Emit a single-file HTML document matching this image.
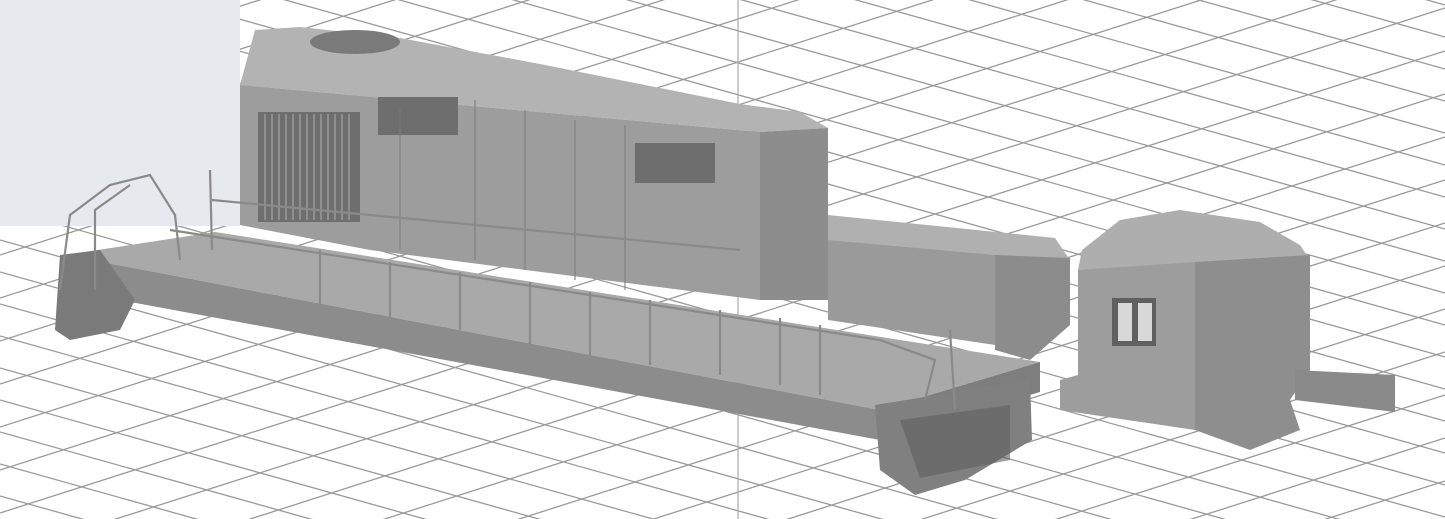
<!DOCTYPE html>
<html><head><style>html,body{margin:0;padding:0;background:#fff;overflow:hidden;width:1445px;height:519px}svg{display:block;position:absolute;left:0;top:0}</style></head>
<body>
<svg width="1445" height="519" viewBox="0 0 1445 519" xmlns="http://www.w3.org/2000/svg">
<defs>
<clipPath id="c"><rect width="1445" height="519"/></clipPath>
</defs>
<rect width="1445" height="519" fill="#fff"/>
<g stroke="#9a9a9c" stroke-width="1.3" clip-path="url(#c)">
<g>
<line x1="0" y1="-400" x2="1445" y2="5"/><line x1="0" y1="-368" x2="1445" y2="37"/><line x1="0" y1="-336" x2="1445" y2="69"/><line x1="0" y1="-304" x2="1445" y2="101"/><line x1="0" y1="-272" x2="1445" y2="133"/><line x1="0" y1="-240" x2="1445" y2="165"/><line x1="0" y1="-208" x2="1445" y2="197"/><line x1="0" y1="-176" x2="1445" y2="229"/><line x1="0" y1="-144" x2="1445" y2="261"/><line x1="0" y1="-112" x2="1445" y2="293"/><line x1="0" y1="-80" x2="1445" y2="325"/><line x1="0" y1="-48" x2="1445" y2="357"/><line x1="0" y1="-16" x2="1445" y2="389"/><line x1="0" y1="16" x2="1445" y2="421"/><line x1="0" y1="48" x2="1445" y2="453"/><line x1="0" y1="80" x2="1445" y2="485"/><line x1="0" y1="112" x2="1445" y2="517"/><line x1="0" y1="144" x2="1445" y2="549"/><line x1="0" y1="176" x2="1445" y2="581"/><line x1="0" y1="208" x2="1445" y2="613"/><line x1="0" y1="240" x2="1445" y2="645"/><line x1="0" y1="272" x2="1445" y2="677"/><line x1="0" y1="304" x2="1445" y2="709"/><line x1="0" y1="336" x2="1445" y2="741"/><line x1="0" y1="368" x2="1445" y2="773"/><line x1="0" y1="400" x2="1445" y2="805"/><line x1="0" y1="432" x2="1445" y2="837"/><line x1="0" y1="464" x2="1445" y2="869"/><line x1="0" y1="496" x2="1445" y2="901"/>
</g>
<g>
<line x1="0" y1="40" x2="1445" y2="-422"/><line x1="0" y1="83" x2="1445" y2="-379"/><line x1="0" y1="126" x2="1445" y2="-336"/><line x1="0" y1="169" x2="1445" y2="-293"/><line x1="0" y1="212" x2="1445" y2="-250"/><line x1="0" y1="255" x2="1445" y2="-207"/><line x1="0" y1="298" x2="1445" y2="-164"/><line x1="0" y1="341" x2="1445" y2="-121"/><line x1="0" y1="384" x2="1445" y2="-78"/><line x1="0" y1="427" x2="1445" y2="-35"/><line x1="0" y1="470" x2="1445" y2="8"/><line x1="0" y1="513" x2="1445" y2="51"/><line x1="0" y1="556" x2="1445" y2="94"/><line x1="0" y1="599" x2="1445" y2="137"/><line x1="0" y1="642" x2="1445" y2="180"/><line x1="0" y1="685" x2="1445" y2="223"/><line x1="0" y1="728" x2="1445" y2="266"/><line x1="0" y1="771" x2="1445" y2="309"/><line x1="0" y1="814" x2="1445" y2="352"/><line x1="0" y1="857" x2="1445" y2="395"/><line x1="0" y1="900" x2="1445" y2="438"/><line x1="0" y1="943" x2="1445" y2="481"/><line x1="0" y1="986" x2="1445" y2="524"/>
</g>
<line x1="738" y1="0" x2="738" y2="519" stroke="#b0b0b0"/>
</g>
<rect x="0" y="0" width="240" height="226" fill="#e6eaef"/>

<polygon points="65,255 215,232 1040,362 880,410" fill="#a9a9a9"/>
<polygon points="65,255 880,410 880,440 65,290" fill="#8c8c8c"/>
<polygon points="880,410 1040,362 1040,392 880,440" fill="#7e7e7e"/>
<polygon points="60,255 100,250 135,300 120,330 70,340 55,330" fill="#7a7a7a"/>
<polygon points="875,405 1030,380 1032,440 965,480 915,495 880,470" fill="#808080"/>
<polygon points="900,420 1010,405 1010,460 920,478" fill="#5f5f5f" opacity=".6"/>

<polygon points="255,30 300,27 400,38 540,64 740,104 800,112 828,128 760,132 240,85" fill="#b3b3b3"/>
<polygon points="240,85 760,132 760,300 370,250 240,225" fill="#9d9d9d"/>
<polygon points="760,132 828,128 828,300 760,300" fill="#8d8d8d"/>
<ellipse cx="355" cy="42" rx="45" ry="12" fill="#7a7a7a"/>
<rect x="258" y="112" width="102" height="110" fill="#6e6e6e"/>
<g stroke="#9a9a9a" stroke-width="1.5">
<line x1="265" y1="114" x2="265" y2="220"/><line x1="272" y1="114" x2="272" y2="220"/><line x1="279" y1="114" x2="279" y2="220"/><line x1="286" y1="114" x2="286" y2="220"/><line x1="293" y1="114" x2="293" y2="220"/><line x1="300" y1="114" x2="300" y2="220"/><line x1="307" y1="114" x2="307" y2="220"/><line x1="314" y1="114" x2="314" y2="220"/><line x1="321" y1="114" x2="321" y2="220"/><line x1="328" y1="114" x2="328" y2="220"/><line x1="335" y1="114" x2="335" y2="220"/><line x1="342" y1="114" x2="342" y2="220"/><line x1="349" y1="114" x2="349" y2="220"/>
</g>
<rect x="378" y="97" width="80" height="38" fill="#6e6e6e"/>
<rect x="635" y="143" width="80" height="40" fill="#6e6e6e"/>
<g stroke="#7a7a7a" stroke-width="1">
<line x1="400" y1="110" x2="400" y2="250"/><line x1="475" y1="100" x2="475" y2="260"/><line x1="525" y1="110" x2="525" y2="270"/><line x1="575" y1="120" x2="575" y2="280"/><line x1="625" y1="125" x2="625" y2="290"/>
</g>

<polygon points="828,215 1055,238 1070,260 870,252 828,240" fill="#b0b0b0"/>
<polygon points="828,240 995,255 995,345 828,320" fill="#9a9a9a"/>
<polygon points="995,255 1070,258 1070,325 1030,360 995,350" fill="#8c8c8c"/>

<polygon points="1082,250 1120,220 1180,210 1260,222 1300,245 1310,260 1078,270" fill="#aeaeae"/>
<polygon points="1078,270 1195,262 1195,430 1060,410 1060,380 1078,375" fill="#9d9d9d"/>
<polygon points="1195,262 1310,255 1310,370 1290,400 1300,430 1250,450 1195,430" fill="#8e8e8e"/>
<rect x="1112" y="298" width="44" height="48" fill="#606060"/>
<rect x="1118" y="303" width="14" height="38" fill="#d8d8d8"/>
<rect x="1138" y="303" width="14" height="38" fill="#d8d8d8"/>
<polygon points="1295,370 1395,375 1395,412 1295,400" fill="#8a8a8a"/>

<g stroke="#8a8a8a" stroke-width="2.2" fill="none">
<path d="M60,290 L70,215 L110,185 L150,175 L175,215 L180,260"/>
<path d="M95,290 L95,210 L130,185"/>
<path d="M210,170 L212,250"/>
<path d="M212,200 L740,250"/>
<path d="M170,230 L880,340"/>
<path d="M320,250 L320,305 M390,262 L390,318 M460,272 L460,330 M530,282 L530,345 M590,292 L590,355 M650,300 L650,365 M720,310 L720,375 M780,318 L780,385 M820,325 L820,395"/>
<path d="M880,340 L935,360 L925,400 M950,330 L955,410"/>
</g>
</svg>
</body></html>
